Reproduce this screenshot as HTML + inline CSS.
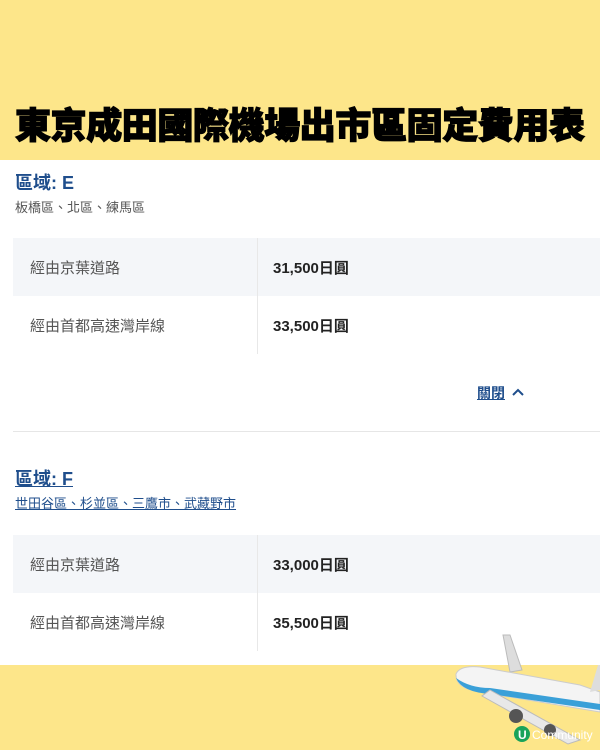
<!DOCTYPE html>
<html><head><meta charset="utf-8"><style>
*{margin:0;padding:0;box-sizing:border-box}
body{width:600px;height:750px;overflow:hidden;background:#fde68a;font-family:"Liberation Sans","Noto Sans CJK TC",sans-serif;position:relative}
.title{position:absolute;left:15px;top:97px;font-size:36px;font-weight:900;color:#000;letter-spacing:-0.4px;white-space:nowrap;-webkit-text-stroke:1.2px #000}
.white{position:absolute;left:0;top:160px;width:600px;height:505px;background:#fff}
.h{position:absolute;left:15px;font-size:18px;font-weight:bold;color:#1f4e8c}
.sub{position:absolute;left:15px;font-size:13px;color:#555}
.row{position:absolute;left:13px;width:587px;height:58px}
.g{background:#f4f6f9}
.l{position:absolute;left:17px;top:19px;font-size:15px;color:#555}
.r{position:absolute;left:260px;top:19px;font-size:15px;font-weight:bold;color:#222}
.vl{position:absolute;left:257px;width:1px;background:#e8e8e8}
</style></head><body>
<div class="title">東京成田國際機場出市區固定費用表</div>
<div class="white"></div>
<div class="h" style="top:169px">區域: E</div>
<div class="sub" style="top:197px">板橋區、北區、練馬區</div>
<div class="row g" style="top:238px"><span class="l">經由京葉道路</span><span class="r">31,500日圓</span></div>
<div class="row" style="top:296px"><span class="l">經由首都高速灣岸線</span><span class="r">33,500日圓</span></div>
<div class="vl" style="top:238px;height:116px"></div>
<div style="position:absolute;left:477px;top:383px;font-size:14px;font-weight:bold;color:#1f4e8c;text-decoration:underline">關閉</div>
<svg style="position:absolute;left:512px;top:388px" width="12" height="8" viewBox="0 0 12 8"><path d="M1 7L6 2L11 7" fill="none" stroke="#1f4e8c" stroke-width="2"/></svg>
<div style="position:absolute;left:13px;top:431px;width:587px;height:1px;background:#e6e6e6"></div>
<div class="h" style="top:465px;text-decoration:underline">區域: F</div>
<div class="sub" style="top:493px;color:#1f4e8c;text-decoration:underline">世田谷區、杉並區、三鷹市、武藏野市</div>
<div class="row g" style="top:535px"><span class="l">經由京葉道路</span><span class="r">33,000日圓</span></div>
<div class="row" style="top:593px"><span class="l">經由首都高速灣岸線</span><span class="r">35,500日圓</span></div>
<div class="vl" style="top:535px;height:116px"></div>
<svg style="position:absolute;left:450px;top:630px" width="150" height="120" viewBox="0 0 150 120">
<path d="M53 5L60 5L72 40L60 42Z" fill="#ddd" stroke="#bbb"/>
<circle cx="44" cy="53" r="7" fill="#555"/>
<path d="M6 44Q10 35 30 37L130 55L150 62L150 82L30 62Q5 58 6 44Z" fill="#f4f4f4" stroke="#ccc"/>
<path d="M6 48Q20 58 40 58L150 74L150 80L40 64Q12 62 6 48Z" fill="#3aa0d8"/>
<path d="M40 60L130 110L118 114L32 66Z" fill="#e8e8e8" stroke="#bbb"/>
<circle cx="66" cy="86" r="7" fill="#555"/>
<circle cx="100" cy="100" r="6" fill="#555"/>
<path d="M148 35L150 35L150 60L140 62Z" fill="#ddd"/>
<circle cx="72" cy="104" r="8" fill="#1aa35a"/>
<text x="68" y="109" font-size="12" font-weight="bold" fill="#fff" font-family="Liberation Sans">U</text>
<text x="82" y="109" font-size="12" fill="#fff" font-family="Liberation Sans">Community</text>
</svg>
</body></html>
